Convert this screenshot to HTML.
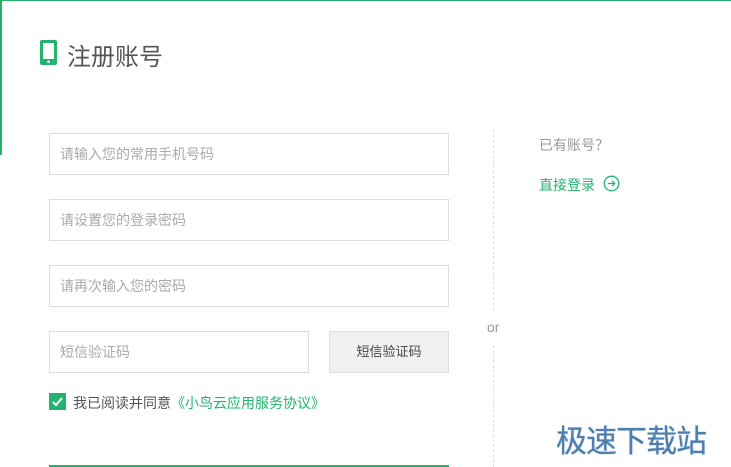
<!DOCTYPE html>
<html><head><meta charset="utf-8"><style>
body{margin:0;width:731px;height:467px;overflow:hidden;background:#fff;font-family:"Liberation Sans","Noto Sans CJK SC",sans-serif;position:relative}
.a{position:absolute}
.in{position:absolute;border:1px solid #dcdcdc;box-sizing:border-box;height:42px;font-size:14px;color:#aaa;line-height:40px;padding-left:10px}
</style></head><body>
<div class="a" style="left:0;top:0;width:731px;height:1px;background:#27b06b"></div>
<div class="a" style="left:0;top:0;width:2px;height:155px;background:#27b06b"></div>
<svg class="a" style="left:40px;top:40px" width="17" height="25" viewBox="0 0 17 25"><rect x="0" y="0" width="17" height="25" rx="2" fill="#22b46f"/><rect x="3" y="3" width="11" height="16" fill="#fff"/><circle cx="8.5" cy="21.7" r="1.3" fill="#fff"/></svg>
<div class="a" style="left:67px;top:37px;font-size:24px;color:#555">注册账号</div>
<div class="in" style="left:49px;top:133px;width:400px">请输入您的常用手机号码</div>
<div class="in" style="left:49px;top:199px;width:400px">请设置您的登录密码</div>
<div class="in" style="left:49px;top:265px;width:400px">请再次输入您的密码</div>
<div class="in" style="left:49px;top:331px;width:260px">短信验证码</div>
<div class="in" style="left:329px;top:331px;width:120px;background:#f0f0f0;color:#444;text-align:center;padding:0;font-size:13px">短信验证码</div>
<div class="a" style="left:49px;top:393px;width:17px;height:17px;background:#22b46f"></div>
<svg class="a" style="left:49px;top:393px" width="17" height="17"><path d="M4 9l3 3 6-7" stroke="#fff" stroke-width="2" fill="none"/></svg>
<div class="a" style="left:73px;top:393px;font-size:14px;color:#555">我已阅读并同意<span style="color:#22b46f">《小鸟云应用服务协议》</span></div>
<div class="a" style="left:49px;top:465px;width:400px;height:2px;background:#22b46f"></div>
<div class="a" style="left:493px;top:130px;height:180px;border-left:1px dashed #ddd"></div>
<div class="a" style="left:493px;top:345px;height:122px;border-left:1px dashed #ddd"></div>
<div class="a" style="left:487px;top:319px;font-size:14px;color:#999">or</div>
<div class="a" style="left:539px;top:135px;font-size:14px;color:#999">已有账号？</div>
<div class="a" style="left:539px;top:175px;font-size:14px;color:#22b46f">直接登录</div>
<svg class="a" style="left:603px;top:175px" width="17" height="17"><circle cx="8.5" cy="8.5" r="7.3" stroke="#22b46f" stroke-width="1.3" fill="none"/><path d="M5 8.5h6.5M9 5.8l2.7 2.7L9 11.2" stroke="#22b46f" stroke-width="1.3" fill="none"/></svg>
<div class="a" style="left:556px;top:416px;font-size:31px;color:#4f7fae;letter-spacing:-1px;text-shadow:0 0 1px #4f7fae">极速下载站</div>
</body></html>
